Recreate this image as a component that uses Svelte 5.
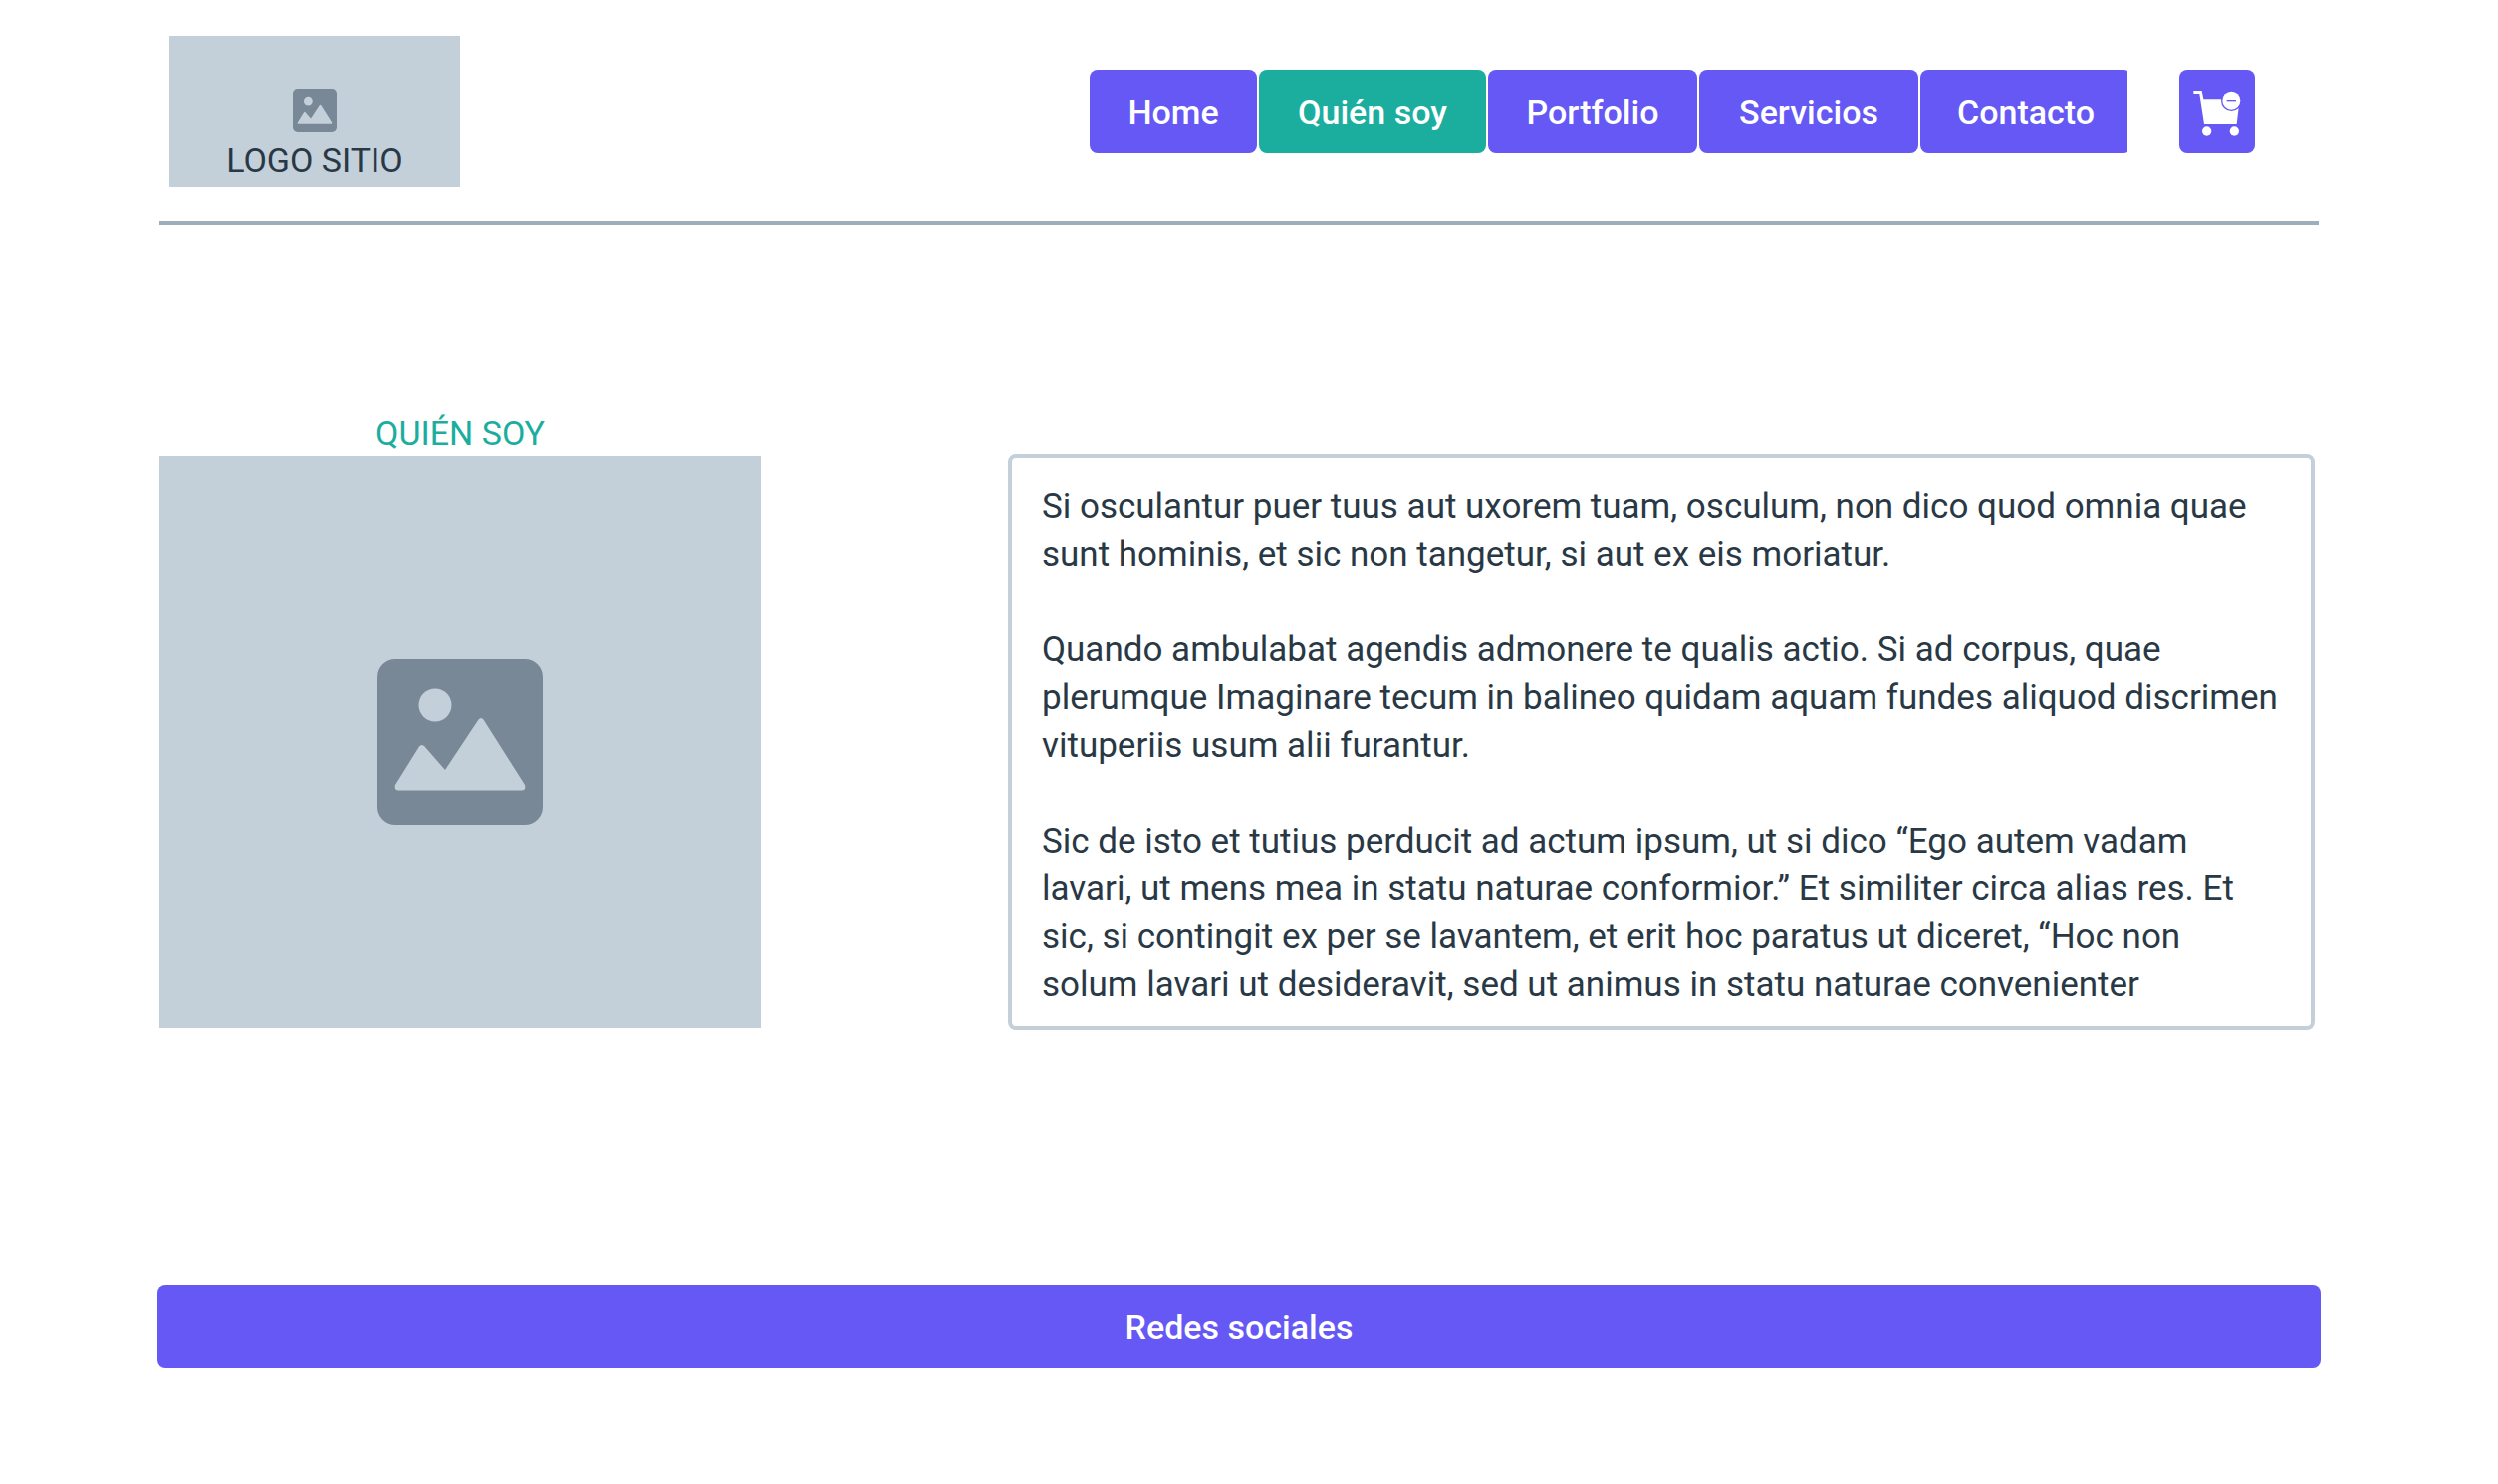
<script>
  const links = ['Home', 'Quién soy', 'Portfolio', 'Servicios', 'Contacto'];
  let current = $state('Quién soy');

  const paragraphs = [
    `Si osculantur puer tuus aut uxorem tuam, osculum, non dico quod omnia quae
sunt hominis, et sic non tangetur, si aut ex eis moriatur.`,
    `Quando ambulabat agendis admonere te qualis actio. Si ad corpus, quae
plerumque Imaginare tecum in balineo quidam aquam fundes aliquod discrimen
vituperiis usum alii furantur.`,
    `Sic de isto et tutius perducit ad actum ipsum, ut si dico “Ego autem vadam
lavari, ut mens mea in statu naturae conformior.” Et similiter circa alias res. Et
sic, si contingit ex per se lavantem, et erit hoc paratus ut diceret, “Hoc non
solum lavari ut desideravit, sed ut animus in statu naturae convenienter`
  ];
</script>

{#snippet picture()}
  <svg class="picture" viewBox="0 0 166 166" aria-hidden="true">
    <rect class="frame" width="166" height="166" rx="18" />
    <circle class="cut" cx="58" cy="46" r="16.5" />
    <path class="cut" d="M18 126 L42 87.500 Q44.500 84.500 47.500 87.500 L68 111 L101.500 60.500 Q104 57.500 106.500 60.500 L148 126 Q149.500 131 145 131.500 H21 Q16.500 131 18 126 Z" />
  </svg>
{/snippet}

<div class="page">
  <header>
    <a class="logo" href="#inicio">
      {@render picture()}
      <span>LOGO SITIO</span>
    </a>
    <div class="actions">
      <nav>
        {#each links as link}
          <button class:active={current === link} onclick={() => (current = link)}>{link}</button>
        {/each}
      </nav>
      <button class="cart" aria-label="Carrito">
        <svg viewBox="90 78 156 156" aria-hidden="true">
          <path class="light" d="M97 93 H122 L127 118 H236 L227 192 H129 L115 102 H97 Z" />
          <circle class="light" cx="137" cy="216" r="14" />
          <circle class="light" cx="220" cy="216" r="14" />
          <circle class="ring" cx="211" cy="122" r="31" />
          <circle class="light" cx="211" cy="122" r="27" />
          <rect class="ring" x="197" y="120" width="28" height="4" />
        </svg>
      </button>
    </div>
  </header>

  <main>
    <section class="profile">
      <h1>QUIÉN SOY</h1>
      <div class="photo">{@render picture()}</div>
    </section>
    <article>
      {#each paragraphs as paragraph}
        <p>{paragraph}</p>
      {/each}
    </article>
  </main>

  <footer>
    <button class="social">Redes sociales</button>
  </footer>
</div>

<style>
  :global(body) {
    background: #fff;
  }
  .page {
    box-sizing: border-box;
    padding: 0 178px 116px 158px;
    font-family: Roboto, sans-serif;
    font-size: 35px;
    line-height: 48px;
    color: #293845;
  }
  header {
    display: flex;
    align-items: center;
    justify-content: space-between;
    margin: 0 2px;
    padding: 36px 64px 34px 10px;
    border-bottom: 4px solid #9dadba;
  }
  .logo {
    box-sizing: border-box;
    width: 292px;
    height: 152px;
    padding: 53px 0 3px;
    display: flex;
    flex-direction: column;
    align-items: center;
    justify-content: space-between;
    background: #c3cfd9;
    color: inherit;
    font-size: 34px;
    text-decoration: none;
  }
  .logo .picture {
    width: 44px;
    height: 44px;
  }
  .picture {
    display: block;
  }
  .frame {
    fill: #788896;
  }
  .cut {
    fill: #c3cfd9;
  }
  .actions {
    display: flex;
    gap: 52px;
  }
  nav {
    display: grid;
    grid-template-columns: 168px 228px 210px 220px 212px;
    gap: 2px;
    width: 1042px;
    overflow: hidden;
  }
  button {
    box-sizing: border-box;
    height: 84px;
    padding: 0;
    border: 0;
    border-radius: 8px;
    background: #6558f5;
    color: #fff;
    font: inherit;
    font-size: 34px;
    font-weight: 500;
    cursor: pointer;
  }
  button.active {
    background: #1bae9f;
  }
  .cart {
    width: 76px;
    display: grid;
    place-items: center;
  }
  .cart svg {
    width: 52px;
    height: 52px;
  }
  .light {
    fill: #fff;
  }
  .ring {
    fill: #6558f5;
  }
  main {
    display: flex;
    align-items: flex-end;
    justify-content: space-between;
    margin: 0 2px;
    padding: 186px 4px 0 0;
  }
  .profile {
    width: 604px;
    padding-bottom: 2px;
  }
  h1 {
    margin: 0;
    font-size: 34px;
    font-weight: 400;
    line-height: 46px;
    text-align: center;
    color: #1bae9f;
  }
  .photo {
    height: 574px;
    display: grid;
    place-items: center;
    background: #c3cfd9;
  }
  .photo .picture {
    width: 166px;
    height: 166px;
  }
  article {
    box-sizing: border-box;
    width: 1312px;
    padding: 25px 20px 17px 30px;
    border: 4px solid #c3cfd9;
    border-radius: 8px;
    display: grid;
    gap: 48px;
  }
  p {
    margin: 0;
    white-space: pre-line;
  }
  footer {
    padding-top: 256px;
  }
  .social {
    width: 100%;
    display: block;
  }
</style>
